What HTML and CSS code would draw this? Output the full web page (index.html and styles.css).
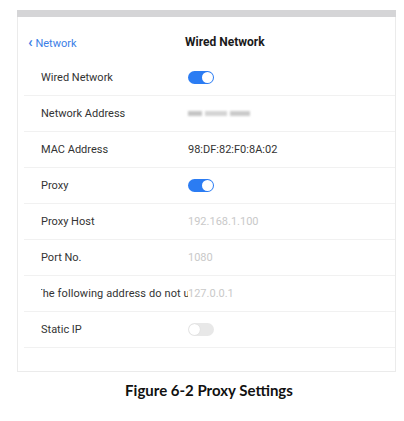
FILE: index.html
```html
<!DOCTYPE html>
<html>
<head>
  <link rel="stylesheet" href="styles.css">
</head>
<body>
  <div class="page">
    <div class="topbar"></div>
    <div class="screen">
      <div class="header">
        <a class="back"><span class="chev">&#8249;</span> Network</a>
        <div class="title">Wired Network</div>
      </div>

      <div class="row">
        <div class="label">Wired Network</div>
        <div class="switch on"></div>
      </div>
      <div class="row">
        <div class="label">Network Address</div>
        <div class="blurred"><span></span><span class="b2"></span><span class="b3"></span></div>
      </div>
      <div class="row">
        <div class="label">MAC Address</div>
        <div class="value">98:DF:82:F0:8A:02</div>
      </div>
      <div class="row">
        <div class="label">Proxy</div>
        <div class="switch on"></div>
      </div>
      <div class="row">
        <div class="label">Proxy Host</div>
        <div class="value muted">192.168.1.100</div>
      </div>
      <div class="row">
        <div class="label">Port No.</div>
        <div class="value muted">1080</div>
      </div>
      <div class="row">
        <div class="label clip"><span>The following address do not use</span></div>
        <div class="value muted">127.0.0.1</div>
      </div>
      <div class="row">
        <div class="label">Static IP</div>
        <div class="switch"></div>
      </div>
      <div class="bottom"></div>
    </div>
    <div class="caption">Figure 6-2 Proxy Settings</div>
  </div>
</body>
</html>
```

FILE: styles.css
```css
body{margin:0;background:#fff;font-family:Roboto,"Liberation Sans",Arial,sans-serif}
.page{width:379px;margin-left:17px;padding-top:10px}
.topbar{height:7px;background:#d5d5d7}
.screen{border:1px solid #ebebeb;border-top:none;background:#fff}
.header{display:flex;align-items:center;height:43px;padding-top:7px;box-sizing:border-box;padding-left:10px}
.back{width:157px;color:#3b7ee6;font-size:11px;text-decoration:none}
.chev{font-size:15px;font-weight:bold}
.title{font-size:12px;font-weight:bold;color:#1a1a1a}
.row{display:flex;align-items:center;height:36px;margin-left:6px;padding-left:17px;border-bottom:1px solid #f1f1f1;box-sizing:border-box;font-size:11px;color:#333}
.label{width:147px;flex:none}
.label.clip{overflow:hidden;white-space:nowrap}
.label.clip span{display:inline-block;margin-left:-5px;letter-spacing:0.1px}
.value{color:#333}
.value.muted{color:#c9c9c9}
.switch{width:26px;height:13px;border-radius:7px;background:#e8e8e8;position:relative}
.switch:after{content:"";position:absolute;top:1px;left:1px;width:11px;height:11px;border-radius:50%;background:#fff;box-shadow:0 0 1px rgba(0,0,0,0.15)}
.switch.on{background:#2b7cf3}
.switch.on:after{left:14px;box-shadow:none}
.blurred{display:flex;gap:3px;align-items:center;filter:blur(1px)}
.blurred span{display:block;width:14px;height:5px;background:#c4c4c4}
.blurred .b2{width:22px;background:#d4d4d4}
.blurred .b3{width:20px;background:#cacaca}
.bottom{height:23px}
.caption{text-align:center;font-family:Lato,"Open Sans",sans-serif;font-weight:bold;font-size:15px;color:#111;margin-top:9px;padding-left:5px}
```
